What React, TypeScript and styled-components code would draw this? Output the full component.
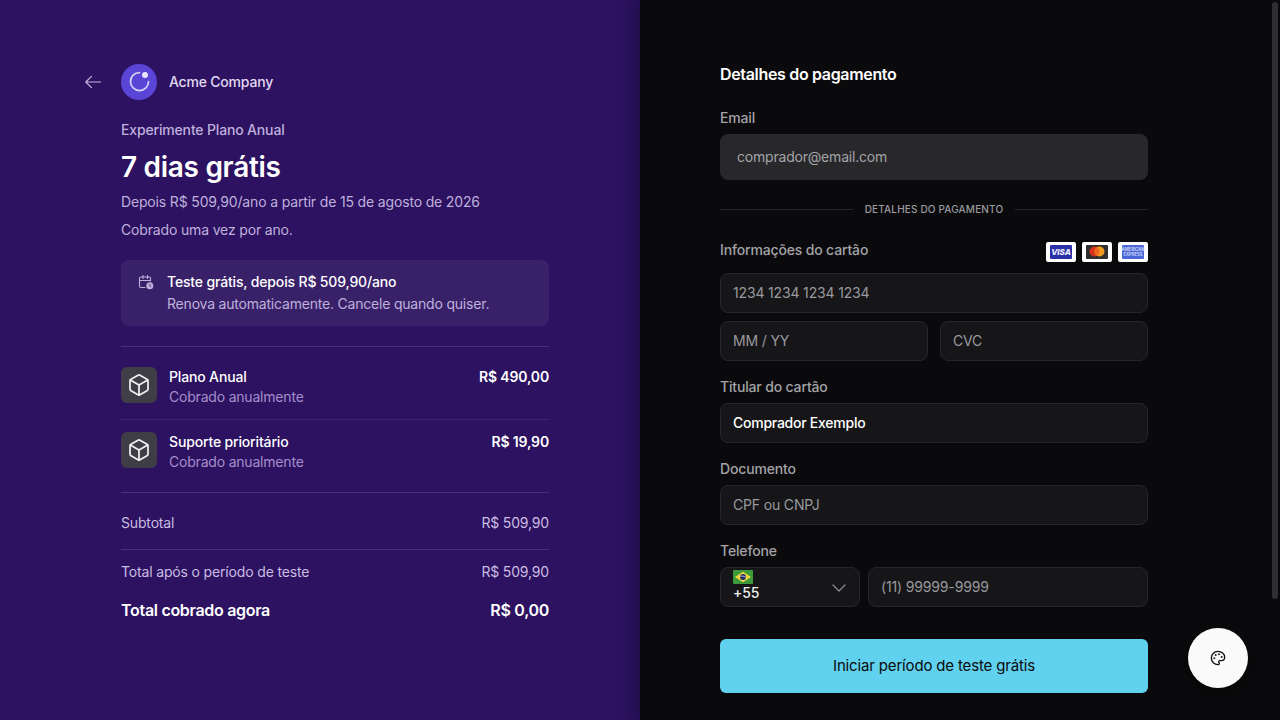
import React from "react";
import styled, { createGlobalStyle } from "styled-components";
import { Box, ChevronDown, Palette } from "lucide-react";

const Global = createGlobalStyle`
  html, body { margin: 0; padding: 0; height: 720px; overflow: hidden; background: #0a0a0c; }
  body { font-family: Inter, "Liberation Sans", sans-serif; -webkit-font-smoothing: antialiased; letter-spacing: -0.16px; }
  * { box-sizing: border-box; }
`;

const Page = styled.div`
  display: grid;
  grid-template-columns: 640px 640px;
  width: 1280px;
  height: 720px;
  overflow: hidden;
`;

const Summary = styled.section`
  background: #2c1261;
  padding: 64px 91px 0 121px;
  color: #fff;
`;

const Brand = styled.div`
  display: flex;
  align-items: center;
  margin-left: -36px;
  height: 36px;
`;

const Back = styled.span`
  display: flex;
  width: 16px;
  margin-right: 20px;
  color: #c3b5de;
`;

const Logo = styled.span`
  width: 36px;
  height: 36px;
  border-radius: 50%;
  background: #5b45d6;
  display: flex;
  align-items: center;
  justify-content: center;
  margin-right: 12px;
`;

const BrandName = styled.span`
  font-size: 14px;
  font-weight: 500;
  line-height: 20px;
  letter-spacing: -0.2px;
  color: #e2daf2;
`;

const Eyebrow = styled.div`
  margin-top: 20px;
  font-size: 14px;
  font-weight: 500;
  line-height: 20px;
  color: #bfb0dc;
`;

const Headline = styled.h1`
  margin: 9px 0 0;
  font-size: 28px;
  font-weight: 600;
  line-height: 36px;
  letter-spacing: -0.3px;
  color: #fff;
`;

const Note = styled.p<{ $top: number }>`
  margin: ${(p) => p.$top}px 0 0;
  font-size: 14px;
  line-height: 20px;
  color: #bfb0dc;
`;

const TrialBox = styled.div`
  margin-top: 20px;
  height: 66px;
  border-radius: 8px;
  background: #392169;
  padding: 12px 17px;
  display: flex;
  gap: 13px;
`;

const TrialIcon = styled.svg`
  display: block;
  flex: none;
  margin-top: 2px;
  width: 16px;
  height: 16px;
  color: #bfb0dc;
`;

const TrialTitle = styled.div`
  font-size: 14px;
  font-weight: 500;
  line-height: 20px;
  color: #fff;
`;

const TrialSub = styled.div`
  margin-top: 2px;
  font-size: 14px;
  line-height: 20px;
  letter-spacing: -0.2px;
  color: #bfb0dc;
`;

const Rule = styled.div<{ $strong?: boolean; $top: number }>`
  margin-top: ${(p) => p.$top}px;
  height: 1px;
  background: ${(p) => (p.$strong ? "#47307a" : "#3c2470")};
`;

const Item = styled.div<{ $pad: number }>`
  display: flex;
  align-items: flex-start;
  gap: 12px;
  padding-top: ${(p) => p.$pad}px;
  height: 72px;
`;

const ItemIcon = styled.span`
  width: 36px;
  height: 36px;
  border-radius: 6px;
  background: #3f3d45;
  color: #f0f0f0;
  display: flex;
  align-items: center;
  justify-content: center;
`;

const ItemText = styled.div`
  flex: 1;
`;

const ItemName = styled.div`
  font-size: 14px;
  font-weight: 500;
  line-height: 20px;
  color: #fff;
`;

const ItemSub = styled.div`
  font-size: 14px;
  line-height: 20px;
  letter-spacing: -0.2px;
  color: #a48fcb;
`;

const ItemPrice = styled.div`
  font-size: 14px;
  font-weight: 600;
  line-height: 20px;
  color: #fff;
`;

const TotalRow = styled.div<{ $top: number; $big?: boolean }>`
  margin-top: ${(p) => p.$top}px;
  display: flex;
  justify-content: space-between;
  font-size: ${(p) => (p.$big ? 16 : 14)}px;
  font-weight: ${(p) => (p.$big ? 600 : 400)};
  letter-spacing: ${(p) => (p.$big ? -0.3 : -0.16)}px;
  line-height: 20px;
  color: ${(p) => (p.$big ? "#fff" : "#cabde2")};
`;

const Payment = styled.section`
  position: relative;
  background: #0a0a0c;
  padding: 64px 132px 0 80px;
  color: #fff;
  box-shadow: -6px 0 14px rgba(0, 0, 0, 0.28);
`;

const Title = styled.h2`
  margin: 0;
  font-size: 16px;
  font-weight: 600;
  line-height: 20px;
  letter-spacing: -0.33px;
  color: #fff;
`;

const Label = styled.label<{ $top: number }>`
  display: block;
  margin-top: ${(p) => p.$top}px;
  font-size: 14px;
  font-weight: 500;
  line-height: 20px;
  color: #a3a3a8;
`;

const EmailField = styled.div`
  margin-top: 6px;
  height: 46px;
  border-radius: 8px;
  background: #28282b;
  display: flex;
  align-items: center;
  padding: 0 17px 2px;
  font-size: 14px;
  letter-spacing: -0.2px;
  color: #a3a3a8;
`;

const Divider = styled.div`
  margin-top: 21px;
  display: flex;
  align-items: center;
  gap: 12px;
  height: 16px;
  font-size: 10px;
  font-weight: 500;
  letter-spacing: 0.17px;
  color: #9a9a9f;
  &::before, &::after {
    content: "";
    flex: 1;
    height: 1px;
    background: #26262a;
  }
`;

const CardHead = styled.div`
  margin-top: 23px;
  display: flex;
  justify-content: space-between;
  height: 33px;
`;

const CardLabel = styled.span`
  font-size: 14px;
  font-weight: 500;
  line-height: 20px;
  color: #a3a3a8;
`;

const Brands = styled.div`
  display: flex;
  gap: 6px;
  align-items: flex-start;
  padding-top: 2px;
`;

const CardLogo = styled.svg`
  display: block;
  width: 30px;
  height: 20px;
`;

const Field = styled.div<{ $top?: number; $strong?: boolean }>`
  margin-top: ${(p) => p.$top ?? 0}px;
  height: 40px;
  flex: 1;
  border: 1px solid #27272a;
  border-radius: 8px;
  background: #161618;
  display: flex;
  align-items: center;
  padding: 0 12px 2px;
  font-size: 14px;
  letter-spacing: ${(p) => (p.$strong ? -0.25 : -0.16)}px;
  font-weight: ${(p) => (p.$strong ? 500 : 400)};
  color: ${(p) => (p.$strong ? "#fff" : "#99999e")};
`;

const Pair = styled.div<{ $gap: number; $top: number }>`
  margin-top: ${(p) => p.$top}px;
  display: flex;
  gap: ${(p) => p.$gap}px;
`;

const CountrySelect = styled.div`
  position: relative;
  width: 140px;
  height: 40px;
  border: 1px solid #27272a;
  border-radius: 8px;
  background: #161618;
  padding: 2px 12px 0;
  font-size: 14px;
  font-weight: 500;
  line-height: 18px;
  color: #f0f0f0;
`;

const Flag = styled.svg`
  display: block;
  width: 20px;
  height: 14px;
`;

const Chevron = styled.span`
  position: absolute;
  right: 8px;
  top: 8px;
  display: flex;
  color: #8f8f94;
`;

const Submit = styled.button`
  margin-top: 32px;
  width: 100%;
  height: 54px;
  border: 0;
  border-radius: 6px;
  background: #60d1ee;
  padding: 0 0 2px;
  font-family: inherit;
  font-size: 15px;
  font-weight: 400;
  letter-spacing: -0.16px;
  color: #0a0a0c;
`;

const Scrollbar = styled.div`
  position: absolute;
  top: 2px;
  right: 2px;
  width: 6px;
  height: 597px;
  border-radius: 3px;
  background: #2f2f32;
`;

const Fab = styled.button`
  position: absolute;
  left: 548px;
  top: 628px;
  width: 60px;
  height: 60px;
  border: 0;
  border-radius: 50%;
  background: #fafafa;
  color: #111;
  display: flex;
  align-items: center;
  justify-content: center;
  box-shadow: 0 4px 16px rgba(0, 0, 0, 0.4);
`;

const items = [
  { name: "Plano Anual", price: "R$ 490,00", pad: 20 },
  { name: "Suporte prioritário", price: "R$ 19,90", pad: 12 },
];

export default function App() {
  return (
    <Page>
      <Global />
      <Summary>
        <Brand>
          <Back>
            <svg width="16" height="14" viewBox="0 0 16 14" fill="none" stroke="currentColor" strokeWidth="1.2" strokeLinecap="round" strokeLinejoin="round">
              <path d="M15.500 7H.8M6.500 1.300.8 7l5.700 5.700" />
            </svg>
          </Back>
          <Logo>
            <svg width="24" height="24" viewBox="0 0 24 24" fill="none">
              <path d="M12.500 2.500A9 9 0 1 0 21.500 11.500" stroke="#d3cff4" strokeWidth="1.75" strokeLinecap="round" />
              <circle cx="18" cy="5" r="3" fill="#e8e5fa" />
            </svg>
          </Logo>
          <BrandName>Acme Company</BrandName>
        </Brand>
        <Eyebrow>Experimente Plano Anual</Eyebrow>
        <Headline>7 dias grátis</Headline>
        <Note $top={7}>Depois R$ 509,90/ano a partir de 15 de agosto de 2026</Note>
        <Note $top={8}>Cobrado uma vez por ano.</Note>
        <TrialBox>
          <TrialIcon viewBox="0 0 16 16" fill="none">
            <path d="M7 13.500H3a1.500 1.500 0 0 1-1.500-1.500V4.500A1.500 1.500 0 0 1 3 3h8a1.500 1.500 0 0 1 1.500 1.500V7M5 1.500v3M9.500 1.500v3M1.500 6.500h11" stroke="currentColor" strokeWidth="1.1" strokeLinecap="round" />
            <circle cx="11.800" cy="11.800" r="3.500" fill="currentColor" />
            <path d="M11.800 10.200v1.700l1 .7" stroke="#392169" strokeWidth=".8" strokeLinecap="round" />
          </TrialIcon>
          <div>
            <TrialTitle>Teste grátis, depois R$ 509,90/ano</TrialTitle>
            <TrialSub>Renova automaticamente. Cancele quando quiser.</TrialSub>
          </div>
        </TrialBox>
        <Rule $top={20} $strong />
        {items.map((it, i) => (
          <React.Fragment key={it.name}>
            {i > 0 && <Rule $top={0} />}
            <Item $pad={it.pad}>
              <ItemIcon><Box size={24} strokeWidth={1.75} /></ItemIcon>
              <ItemText>
                <ItemName>{it.name}</ItemName>
                <ItemSub>Cobrado anualmente</ItemSub>
              </ItemText>
              <ItemPrice>{it.price}</ItemPrice>
            </Item>
          </React.Fragment>
        ))}
        <Rule $top={0} $strong />
        <TotalRow $top={20}><span>Subtotal</span><span>R$ 509,90</span></TotalRow>
        <Rule $top={16} $strong />
        <TotalRow $top={12}><span>Total após o período de teste</span><span>R$ 509,90</span></TotalRow>
        <TotalRow $big $top={18}><span>Total cobrado agora</span><span>R$ 0,00</span></TotalRow>
      </Summary>
      <Payment>
        <Title>Detalhes do pagamento</Title>
        <Label $top={24}>Email</Label>
        <EmailField>comprador@email.com</EmailField>
        <Divider>DETALHES DO PAGAMENTO</Divider>
        <CardHead>
          <CardLabel>Informações do cartão</CardLabel>
          <Brands>
            <CardLogo viewBox="0 0 30 20">
              <rect width="30" height="20" rx="2" fill="#fff" />
              <rect x="4" y="3" width="22" height="14" rx="1" fill="#2b30a8" />
              <text x="15" y="13" textAnchor="middle" fontFamily="Inter, sans-serif" fontSize="8" fontWeight="800" fontStyle="italic" letterSpacing="0" fill="#eef">VISA</text>
            </CardLogo>
            <CardLogo viewBox="0 0 30 20">
              <rect width="30" height="20" rx="2" fill="#fff" />
              <rect x="4" y="3" width="22" height="14" rx="1" fill="#2f2f2f" />
              <circle cx="12.500" cy="9.500" r="5" fill="#d8321e" />
              <circle cx="17.500" cy="9.500" r="5" fill="#f29a1f" />
              <path d="M15 5.200a5 5 0 0 1 0 8.600 5 5 0 0 1 0-8.600z" fill="#ee6a1c" />
            </CardLogo>
            <CardLogo viewBox="0 0 30 20">
              <rect width="30" height="20" rx="2" fill="#fff" />
              <rect x="4" y="3" width="22" height="14" rx="1" fill="#4a66d8" />
              <text x="15" y="9" textAnchor="middle" fontFamily="Inter, sans-serif" fontSize="4.200" fontWeight="700" letterSpacing="0" fill="#c9d3f6">AMERICAN</text>
              <text x="15" y="14" textAnchor="middle" fontFamily="Inter, sans-serif" fontSize="4.200" fontWeight="700" letterSpacing="0" fill="#c9d3f6">EXPRESS</text>
            </CardLogo>
          </Brands>
        </CardHead>
        <Field>1234 1234 1234 1234</Field>
        <Pair $gap={12} $top={8}>
          <Field>MM / YY</Field>
          <Field>CVC</Field>
        </Pair>
        <Label $top={16}>Titular do cartão</Label>
        <Field $top={6} $strong>Comprador Exemplo</Field>
        <Label $top={16}>Documento</Label>
        <Field $top={6}>CPF ou CNPJ</Field>
        <Label $top={16}>Telefone</Label>
        <Pair $gap={8} $top={6}>
          <CountrySelect>
            <Flag viewBox="0 0 20 14">
              <rect width="20" height="14" rx="1" fill="#3d9a3a" />
              <path d="M10 1.800 18 7l-8 5.200L2 7z" fill="#f4d63a" />
              <circle cx="10" cy="7" r="3" fill="#1f2f6e" />
              <path d="M7.200 6.300c2-.5 4-.1 5.600 1" stroke="#fff" strokeWidth=".7" fill="none" />
            </Flag>
            +55
            <Chevron><ChevronDown size={24} strokeWidth={1.2} /></Chevron>
          </CountrySelect>
          <Field>(11) 99999-9999</Field>
        </Pair>
        <Submit>Iniciar período de teste grátis</Submit>
        <Scrollbar />
        <Fab><Palette size={16} strokeWidth={2} /></Fab>
      </Payment>
    </Page>
  );
}
